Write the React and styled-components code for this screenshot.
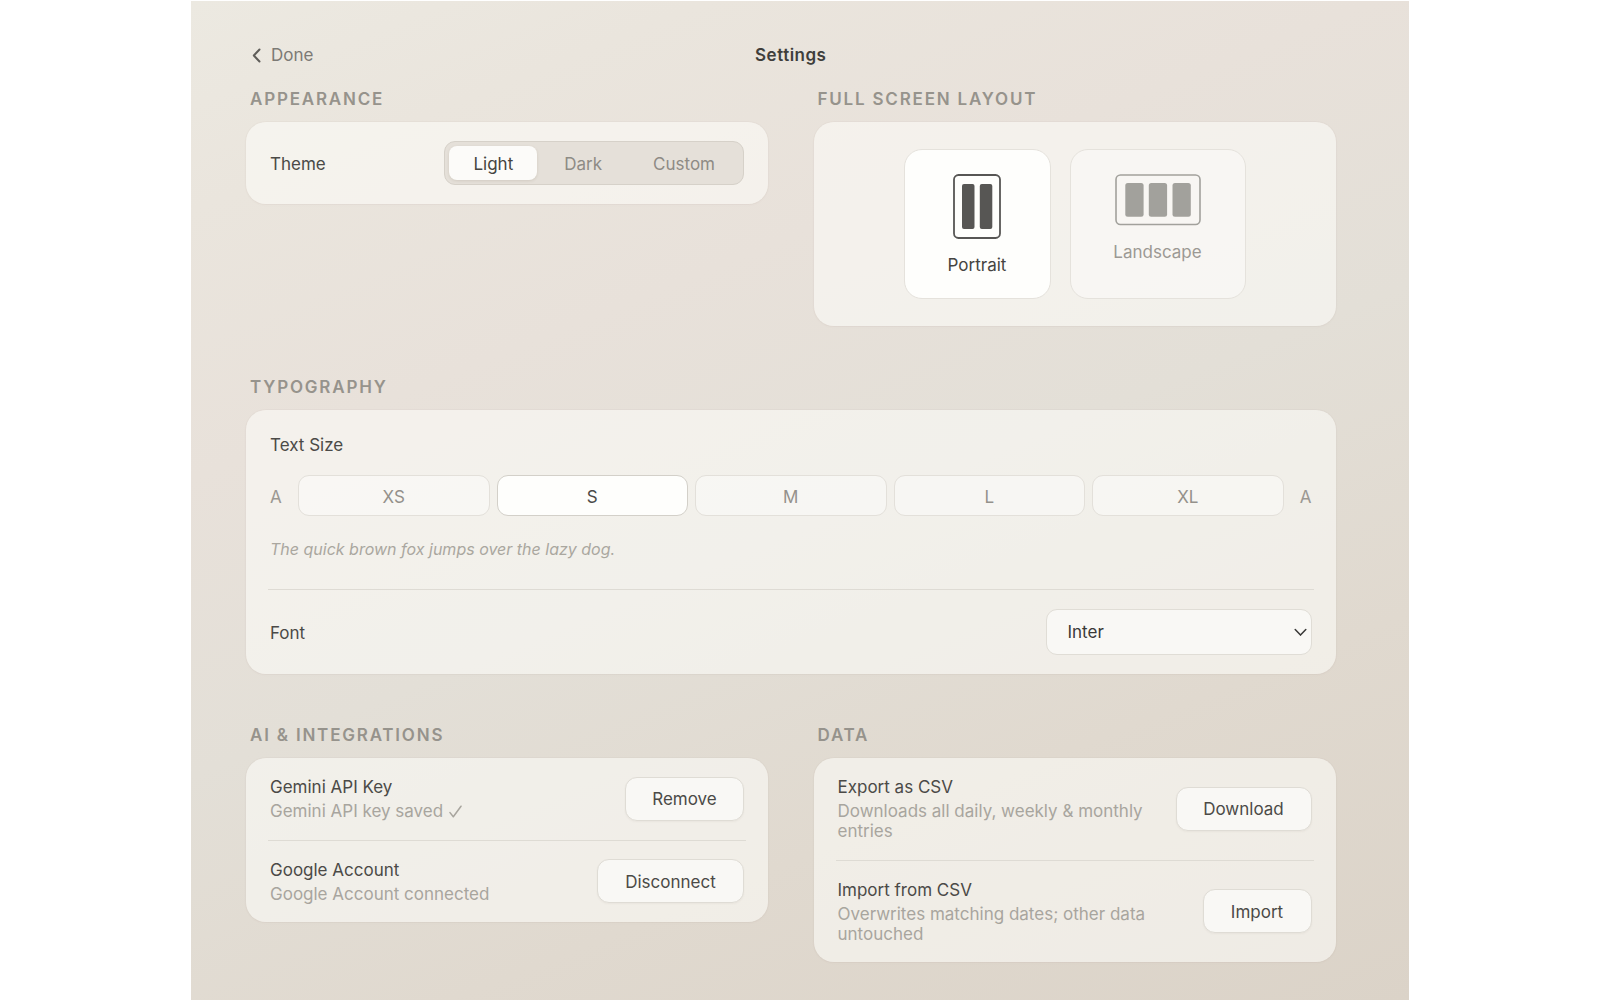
import React, { useState } from "react";
import styled, { createGlobalStyle } from "styled-components";

const GlobalStyle = createGlobalStyle`
    * { box-sizing: border-box; }
    body { margin: 0; background: #fff; }
    button, select { font: inherit; letter-spacing: inherit; margin: 0; }
`;

const Page = styled.main`
    width: 1217.5px;
    height: 999px;
    margin: 1px 0 0 191px;
    padding: 36px 73px 0 55px;
    overflow: hidden;
    background: linear-gradient(158deg, #ece9e1 0%, #eae5dd 14%, #e8e1da 32%, #e3dfd7 52%, #e0d9cf 74%, #dbd3c8 100%);
    color: #4b4a47;
    font: 400 17px/20px Inter, "Liberation Sans", sans-serif;
`;

const Header = styled.header`
    display: grid;
    grid-template-columns: 1fr auto 1fr;
    align-items: center;
    height: 36px;
    margin-bottom: 16px;
`;

const Back = styled.button`
    display: flex;
    align-items: center;
    gap: 10px;
    padding: 0 0 0 6px;
    border: 0;
    background: none;
    color: #7c7a75;
    svg { color: #5f5d59; }
`;

const Title = styled.h1`
    margin: 0;
    font-size: 17px;
    font-weight: 600;
    letter-spacing: 0.5px;
    color: #3f3e3b;
`;

const Columns = styled.div`
    display: grid;
    grid-template-columns: 522px 522px;
    justify-content: space-between;
    align-items: start;
`;

const Section = styled.section`
    margin-bottom: ${(props) => props.$space || 0}px;
`;

const Heading = styled.h2`
    margin: 0 0 13px;
    padding-left: 4px;
    font-size: 17px;
    line-height: 20px;
    font-weight: 600;
    letter-spacing: 1.8px;
    color: #96938c;
`;

const Card = styled.div`
    padding: 0 24px;
    border-radius: 20px;
    background: rgba(254, 254, 249, 0.57);
    box-shadow: 0 0 1px 1px rgba(120, 110, 90, 0.03), 0 1px 3px rgba(120, 110, 90, 0.03);
`;

const Row = styled.div`
    display: flex;
    align-items: center;
    justify-content: space-between;
    height: ${(props) => props.$height}px;
`;

const Label = styled.span`
    padding-top: ${(props) => props.$drop || 0}px;
`;

const Divider = styled.hr`
    height: 1px;
    margin: 0 -2px;
    border: 0;
    background: #dedbd4;
`;

const Segmented = styled.div`
    display: flex;
    gap: 3px;
    height: 44px;
    padding: 4px;
    border: 1px solid #d6d1c9;
    border-radius: 11px;
    background: #e5e0d9;
`;

const Segment = styled.button`
    padding: 1px 24px 0;
    border: 0;
    border-radius: 8px;
    background: ${(props) => (props.$active ? "#fcfbf9" : "transparent")};
    box-shadow: ${(props) => (props.$active ? "0 1px 3px rgba(90, 80, 60, 0.14)" : "none")};
    color: ${(props) => (props.$active ? "#454441" : "#8e8b85")};
`;

const LayoutCard = styled(Card)`
    display: flex;
    justify-content: center;
    gap: 19px;
    height: 204px;
    padding: 27px 0;
`;

const LayoutOption = styled.button`
    display: flex;
    flex-direction: column;
    align-items: center;
    gap: 16px;
    width: ${(props) => props.$width}px;
    height: 150px;
    padding: 24px 0 0;
    border: 1px solid #e5e2dc;
    border-radius: 18px;
    background: ${(props) => (props.$active ? "#fefefc" : "rgba(255, 255, 255, 0.4)")};
    color: ${(props) => (props.$active ? "#454441" : "#9c9993")};
    svg { color: ${(props) => (props.$active ? "#575654" : "#a2a19c")}; }
`;

const TypeRow = styled.div`
    padding-top: 25px;
    height: 179px;
`;

const Sizes = styled.div`
    display: flex;
    align-items: center;
    gap: 7px;
    margin: 20px 0 23px;
    color: #9b9892;
`;

const Letter = styled.span`
    width: 21px;
    padding-top: 2px;
    text-align: ${(props) => props.$align || "left"};
`;

const SizeButton = styled.button`
    flex: 1;
    height: 41px;
    padding: 2px 0 0;
    border: 1px solid ${(props) => (props.$active ? "#d3d0c9" : "#e3e0da")};
    border-radius: 11px;
    background: ${(props) => (props.$active ? "#fefefc" : "rgba(255, 255, 255, 0.42)")};
    color: ${(props) => (props.$active ? "#4b4a47" : "#94918b")};
`;

const Sample = styled.p`
    margin: 0;
    font-size: 16px;
    font-style: italic;
    color: #aaa79f;
`;

const SelectWrap = styled.div`
    display: flex;
    align-items: center;
    justify-content: space-between;
    width: 266px;
    height: 46px;
    padding: 0 4px 0 21px;
    border: 1px solid #e0ddd6;
    border-radius: 11px;
    background: #f9f8f5;
    color: #3a3937;
`;

const Info = styled.div`
    display: flex;
    flex-direction: column;
    gap: 4px;
    max-width: 320px;
    padding-top: 1px;
`;

const Hint = styled.span`
    color: #a8a59e;
    svg { margin-left: 6px; vertical-align: -1px; }
`;

const Action = styled.button`
    height: 44px;
    width: ${(props) => props.$width}px;
    padding: 1px 0 0;
    border: 1px solid #dfdcd5;
    border-radius: 12px;
    background: #f9f8f5;
    box-shadow: 0 1px 2px rgba(90, 80, 60, 0.05);
    color: #4b4a47;
`;

const PortraitIcon = () => (
    <svg width="48" height="65" viewBox="0 0 48 65" fill="currentColor">
        <rect x="1" y="1" width="46" height="63" rx="4.5" fill="none" stroke="currentColor" strokeWidth="1.8" />
        <rect x="9" y="10" width="12.5" height="45" rx="2" />
        <rect x="26.8" y="10" width="12.5" height="45" rx="2" />
    </svg>
);

const LandscapeIcon = () => (
    <svg width="86" height="52" viewBox="0 0 86 52" fill="currentColor">
        <rect x="1" y="1" width="84" height="49.5" rx="4.5" fill="none" stroke="currentColor" strokeWidth="1.6" />
        <rect x="10.3" y="9" width="18.3" height="33.7" rx="2.5" />
        <rect x="33.8" y="9" width="18.3" height="33.7" rx="2.5" />
        <rect x="57.5" y="9" width="18.3" height="33.7" rx="2.5" />
    </svg>
);

const CheckIcon = () => (
    <svg width="13" height="13" viewBox="0 0 13 13" fill="none" stroke="currentColor" strokeWidth="1.5" strokeLinecap="round" strokeLinejoin="round">
        <path d="M1 7.6 4.3 11.8 12 1.2" />
    </svg>
);

const themes = ["Light", "Dark", "Custom"];
const sizes = ["XS", "S", "M", "L", "XL"];

function Setting({ title, hint, done, action, width, height }) {
    return (
        <Row $height={height}>
            <Info>
                <span>{title}</span>
                <Hint>{hint}{done && <CheckIcon />}</Hint>
            </Info>
            <Action $width={width}>{action}</Action>
        </Row>
    );
}

export default function App() {
    const [theme, setTheme] = useState("Light");
    const [layout, setLayout] = useState("portrait");
    const [size, setSize] = useState("S");

    return <>
        <GlobalStyle />
        <Page>
            <Header>
                <Back>
                    <svg width="9" height="15" viewBox="0 0 9 15" fill="none" stroke="currentColor" strokeWidth="2" strokeLinecap="round" strokeLinejoin="round">
                        <path d="M7.5 1.5 1.8 7.5l5.7 6" />
                    </svg>
                    Done
                </Back>
                <Title>Settings</Title>
            </Header>

            <Columns>
                <Section>
                    <Heading>APPEARANCE</Heading>
                    <Card>
                        <Row $height={82}>
                            <Label $drop={1}>Theme</Label>
                            <Segmented>
                                {themes.map((x) =>
                                    <Segment key={x} $active={theme === x} onClick={() => setTheme(x)}>{x}</Segment>)}
                            </Segmented>
                        </Row>
                    </Card>
                </Section>
                <Section $space={51}>
                    <Heading>FULL SCREEN LAYOUT</Heading>
                    <LayoutCard>
                        <LayoutOption $width={147} $active={layout === "portrait"} onClick={() => setLayout("portrait")}>
                            <PortraitIcon />
                            Portrait
                        </LayoutOption>
                        <LayoutOption $width={176} $active={layout === "landscape"} onClick={() => setLayout("landscape")}>
                            <LandscapeIcon />
                            Landscape
                        </LayoutOption>
                    </LayoutCard>
                </Section>
            </Columns>

            <Section $space={50.5}>
                <Heading>TYPOGRAPHY</Heading>
                <Card>
                    <TypeRow>
                        <div>Text Size</div>
                        <Sizes>
                            <Letter>A</Letter>
                            {sizes.map((x) =>
                                <SizeButton key={x} $active={size === x} onClick={() => setSize(x)}>{x}</SizeButton>)}
                            <Letter $align="right">A</Letter>
                        </Sizes>
                        <Sample>The quick brown fox jumps over the lazy dog.</Sample>
                    </TypeRow>
                    <Divider />
                    <Row $height={84}>
                        <Label $drop={2}>Font</Label>
                        <SelectWrap>
                            Inter
                            <svg width="13" height="9" viewBox="0 0 13 9" fill="none" stroke="currentColor" strokeWidth="1.5" strokeLinecap="round" strokeLinejoin="round">
                                <path d="m1.2 1.5 5.3 5.6 5.3-5.6" />
                            </svg>
                        </SelectWrap>
                    </Row>
                </Card>
            </Section>

            <Columns>
                <Section>
                    <Heading>AI &amp; INTEGRATIONS</Heading>
                    <Card>
                        <Setting title="Gemini API Key" hint="Gemini API key saved" done action="Remove" width={119} height={82} />
                        <Divider />
                        <Setting title="Google Account" hint="Google Account connected" action="Disconnect" width={147} height={81} />
                    </Card>
                </Section>
                <Section>
                    <Heading>DATA</Heading>
                    <Card>
                        <Setting title="Export as CSV" hint="Downloads all daily, weekly & monthly entries" action="Download" width={136} height={102} />
                        <Divider />
                        <Setting title="Import from CSV" hint="Overwrites matching dates; other data untouched" action="Import" width={109} height={101} />
                    </Card>
                </Section>
            </Columns>
        </Page>
    </>;
}
